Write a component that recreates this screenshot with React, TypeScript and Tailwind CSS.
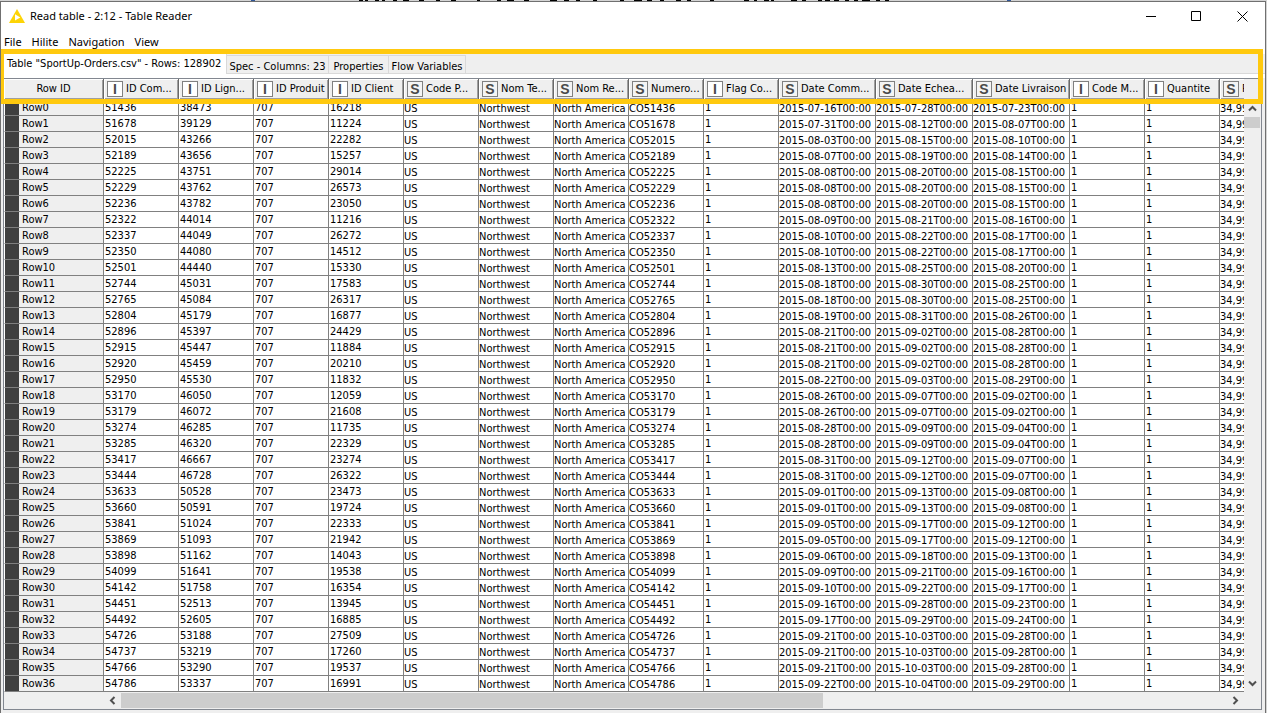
import { ReactNode } from "react";

type ColumnType = "I" | "S";

const columns: { label: string; type: ColumnType; width: string }[] = [
  { label: "ID Com...", type: "I", width: "w-[75px]" },
  { label: "ID Lign...", type: "I", width: "w-[75px]" },
  { label: "ID Produit", type: "I", width: "w-[75px]" },
  { label: "ID Client", type: "I", width: "w-[75px]" },
  { label: "Code P...", type: "S", width: "w-[75px]" },
  { label: "Nom Te...", type: "S", width: "w-[75px]" },
  { label: "Nom Re...", type: "S", width: "w-[75px]" },
  { label: "Numero...", type: "S", width: "w-[75px]" },
  { label: "Flag Co...", type: "I", width: "w-[75px]" },
  { label: "Date Comm...", type: "S", width: "w-[97px]" },
  { label: "Date Echea...", type: "S", width: "w-[97px]" },
  { label: "Date Livraison", type: "S", width: "w-[97px]" },
  { label: "Code M...", type: "I", width: "w-[75px]" },
  { label: "Quantite", type: "I", width: "w-[75px]" },
  { label: "Prix...", type: "S", width: "w-[75px]" },
];

// order id, line id, client id, order date, due date, delivery date
const orders: [string, string, string, string, string, string][] = [
  ["51436", "38473", "16218", "07-16", "07-28", "07-23"],
  ["51678", "39129", "11224", "07-31", "08-12", "08-07"],
  ["52015", "43266", "22282", "08-03", "08-15", "08-10"],
  ["52189", "43656", "15257", "08-07", "08-19", "08-14"],
  ["52225", "43751", "29014", "08-08", "08-20", "08-15"],
  ["52229", "43762", "26573", "08-08", "08-20", "08-15"],
  ["52236", "43782", "23050", "08-08", "08-20", "08-15"],
  ["52322", "44014", "11216", "08-09", "08-21", "08-16"],
  ["52337", "44049", "26272", "08-10", "08-22", "08-17"],
  ["52350", "44080", "14512", "08-10", "08-22", "08-17"],
  ["52501", "44440", "15330", "08-13", "08-25", "08-20"],
  ["52744", "45031", "17583", "08-18", "08-30", "08-25"],
  ["52765", "45084", "26317", "08-18", "08-30", "08-25"],
  ["52804", "45179", "16877", "08-19", "08-31", "08-26"],
  ["52896", "45397", "24429", "08-21", "09-02", "08-28"],
  ["52915", "45447", "11884", "08-21", "09-02", "08-28"],
  ["52920", "45459", "20210", "08-21", "09-02", "08-28"],
  ["52950", "45530", "11832", "08-22", "09-03", "08-29"],
  ["53170", "46050", "12059", "08-26", "09-07", "09-02"],
  ["53179", "46072", "21608", "08-26", "09-07", "09-02"],
  ["53274", "46285", "11735", "08-28", "09-09", "09-04"],
  ["53285", "46320", "22329", "08-28", "09-09", "09-04"],
  ["53417", "46667", "23274", "08-31", "09-12", "09-07"],
  ["53444", "46728", "26322", "08-31", "09-12", "09-07"],
  ["53633", "50528", "23473", "09-01", "09-13", "09-08"],
  ["53660", "50591", "19724", "09-01", "09-13", "09-08"],
  ["53841", "51024", "22333", "09-05", "09-17", "09-12"],
  ["53869", "51093", "21942", "09-05", "09-17", "09-12"],
  ["53898", "51162", "14043", "09-06", "09-18", "09-13"],
  ["54099", "51641", "19538", "09-09", "09-21", "09-16"],
  ["54142", "51758", "16354", "09-10", "09-22", "09-17"],
  ["54451", "52513", "13945", "09-16", "09-28", "09-23"],
  ["54492", "52605", "16885", "09-17", "09-29", "09-24"],
  ["54726", "53188", "27509", "09-21", "10-03", "09-28"],
  ["54737", "53219", "17260", "09-21", "10-03", "09-28"],
  ["54766", "53290", "19537", "09-21", "10-03", "09-28"],
  ["54786", "53337", "16991", "09-22", "10-04", "09-29"],
];

const stamp = (day: string) => `2015-${day}T00:00`;

function toCells([order, line, client, ordered, due, delivered]: (typeof orders)[number]) {
  return [
    order, line, "707", client, "US", "Northwest", "North America", `CO${order}`, "1",
    stamp(ordered), stamp(due), stamp(delivered), "1", "1", "34,99",
  ];
}

function TypeBadge({ type }: { type: ColumnType }) {
  return (
    <span
      className={`flex size-4 shrink-0 items-center justify-center border border-[#808080] font-['Liberation_Sans',sans-serif] text-[14px] leading-[14px] font-bold text-[#4a4a4a] ${
        type === "I" ? "bg-white" : "bg-[#f4f4f4]"
      }`}
    >
      {type}
    </span>
  );
}

function ScrollButton({ label, path }: { label: string; path: string }) {
  return (
    <button aria-label={label} className="flex size-[17px] shrink-0 items-center justify-center">
      <svg width="9" height="9" viewBox="0 0 9 9" fill="none" stroke="#505050" strokeWidth="2">
        <path d={path} />
      </svg>
    </button>
  );
}

function WindowButton({ label, children }: { label: string; children: ReactNode }) {
  return (
    <button aria-label={label} className="flex h-7 w-[46px] items-center justify-center">
      <svg width="11" height="11" viewBox="0 0 11 11" fill="none" stroke="#000">
        {children}
      </svg>
    </button>
  );
}

function TitleBar() {
  return (
    <header className="flex h-7 items-center bg-white pl-2">
      <svg width="16" height="14" viewBox="0 0 16 14" aria-hidden="true">
        <path d="M8 0 L16 14 H0 Z" fill="#fdd406" />
        <path d="M6 5.2 L11.3 8.4 L6 11.4 Z" fill="#fff" />
      </svg>
      <h1 className="ml-[5px] flex-1">Read table - 2:12 - Table Reader</h1>
      <WindowButton label="Minimize">
        <path d="M1 5.5 H11" />
      </WindowButton>
      <WindowButton label="Maximize">
        <path d="M.5 .5 H9.5 V9.5 H.5 Z" />
      </WindowButton>
      <WindowButton label="Close">
        <path d="M.5 .5 L10.5 10.5 M10.5 .5 L.5 10.5" />
      </WindowButton>
    </header>
  );
}

function Tabs() {
  return (
    <div className="ml-[3px] bg-[#efefef]">
      <div role="tablist" className="flex h-6 items-start border-b-4 border-white">
        <button
          role="tab"
          aria-selected="true"
          className="h-5 w-[223px] shrink-0 border-r border-[#d9d9d9] bg-white pl-[3px] text-left whitespace-nowrap"
        >
          Table "SportUp-Orders.csv" - Rows: 128902
        </button>
        <div className="flex h-full flex-1 items-end border-b border-[#d9d9d9]">
          {[
            ["Spec - Columns: 23", "w-[102px]"],
            ["Properties", "w-[60px]"],
            ["Flow Variables", "w-[77px]"],
          ].map(([label, width]) => (
            <button
              key={label}
              role="tab"
              aria-selected="false"
              className={`h-[18px] shrink-0 border-t border-r border-[#d9d9d9] pt-[3px] whitespace-nowrap ${width}`}
            >
              {label}
            </button>
          ))}
        </div>
      </div>
    </div>
  );
}

function DataTable() {
  return (
    <table className="w-[1291px] table-fixed border-separate border-spacing-0 bg-white">
      <colgroup>
        <col className="w-[15px]" />
        <col className="w-[85px]" />
        {columns.map((c) => (
          <col key={c.label} className={c.width} />
        ))}
      </colgroup>
      <thead>
        <tr>
          <th
            colSpan={2}
            className="h-[21px] border-r border-b border-[#696969] bg-[#efefef] p-0 pb-px font-normal shadow-[inset_1px_1px_#fff,inset_-1px_-1px_#a0a0a0]"
          >
            Row ID
          </th>
          {columns.map((c) => (
            <th
              key={c.label}
              className="h-[21px] border-r border-b border-[#696969] bg-[#efefef] p-0 pl-[3px] text-left font-normal shadow-[inset_1px_1px_#fff,inset_-1px_-1px_#a0a0a0]"
            >
              <div className="flex items-center gap-[3px] leading-4 whitespace-nowrap">
                <TypeBadge type={c.type} />
                <span className="pb-px">{c.label}</span>
              </div>
            </th>
          ))}
        </tr>
      </thead>
      <tbody>
        {orders.map((order, i) => (
          <tr key={order[0]}>
            <td className="h-4 border-b border-l border-b-[#808080] border-l-white bg-[#404040] p-0" />
            <th
              scope="row"
              className="h-4 border-r border-b border-[#808080] bg-[#efefef] p-0 pl-[3px] text-left align-top leading-[15px] font-normal"
            >
              Row{i}
            </th>
            {toCells(order).map((value, j) => (
              <td
                key={columns[j].label}
                className={`h-4 border-r border-b border-[#808080] p-0 align-top whitespace-nowrap ${
                  columns[j].type === "I" ? "pl-px leading-[15px]" : "pt-[2px] leading-[13px]"
                }`}
              >
                {value}
              </td>
            ))}
          </tr>
        ))}
      </tbody>
    </table>
  );
}

const headingMarks =
  "M359 0h4M365 0h3M375 0h4M382 0h3M393 0h4M403 0h6M419 0h5M436 0h4M451 0h5M477 0h3M497 0h4M507 0h7M524 0h5M550 0h7M564 0h5M576 0h4M593 0h4M620 0h4M634 0h8M647 0h5M660 0h4M676 0h5M687 0h4M710 0h4M744 0h5M754 0h3M764 0h5M771 0h3M791 0h6M802 0h4M818 0h4M825 0h5M834 0h5M845 0h4M854 0h4M862 0h8M876 0h4M885 0h4";

export default function App() {
  return (
    <div className="min-h-screen bg-[#d4d4d4] pr-px font-['DejaVu_Sans_Condensed','DejaVu_Sans',sans-serif] text-[11px] leading-4 text-black">
      <svg className="block h-px w-full overflow-hidden" aria-hidden="true">
        <path d={headingMarks} stroke="#000" strokeWidth="2" />
        <path d="M251 0h4M1007 0h4" stroke="#2f5597" strokeWidth="2" />
      </svg>
      <main className="relative flex min-h-[calc(100vh-1px)] flex-col overflow-hidden border-x border-t border-[#707070] bg-[#efefef]">
        <div className="bg-white font-['Noto_Sans',sans-serif]">
          <TitleBar />
          <nav className="flex h-6 items-center gap-[10px] pl-[3px]">
            {["File", "Hilite", "Navigation", "View"].map((item) => (
              <button key={item}>{item}</button>
            ))}
          </nav>
        </div>
        <Tabs />
        <section className="mr-[3px] ml-[2px] border border-[#828790]">
          <div className="flex">
            <div className="min-w-0 flex-1 overflow-hidden">
              <DataTable />
            </div>
            <div className="flex w-[17px] shrink-0 flex-col bg-[#efefef] pt-[21px]">
              <ScrollButton label="Scroll up" path="M1 6.5 L4.5 3 L8 6.5" />
              <div className="h-[11px] w-4 bg-[#cdcdcd]" />
              <div className="flex-1" />
              <ScrollButton label="Scroll down" path="M1 2.5 L4.5 6 L8 2.5" />
            </div>
          </div>
          <div className="flex h-[17px] items-center pr-[17px] pl-[100px]">
            <ScrollButton label="Scroll left" path="M6.5 1 L3 4.5 L6.5 8" />
            <div className="flex h-[15px] flex-1">
              <div className="flex-[703] bg-[#cdcdcd]" />
              <div className="flex-[404]" />
            </div>
            <ScrollButton label="Scroll right" path="M2.5 1 L6 4.5 L2.5 8" />
          </div>
        </section>
        <div className="pointer-events-none absolute top-[47px] right-[2px] -left-px h-[55px] border-5 border-l-4 border-[#ffc90e]" />
      </main>
    </div>
  );
}
